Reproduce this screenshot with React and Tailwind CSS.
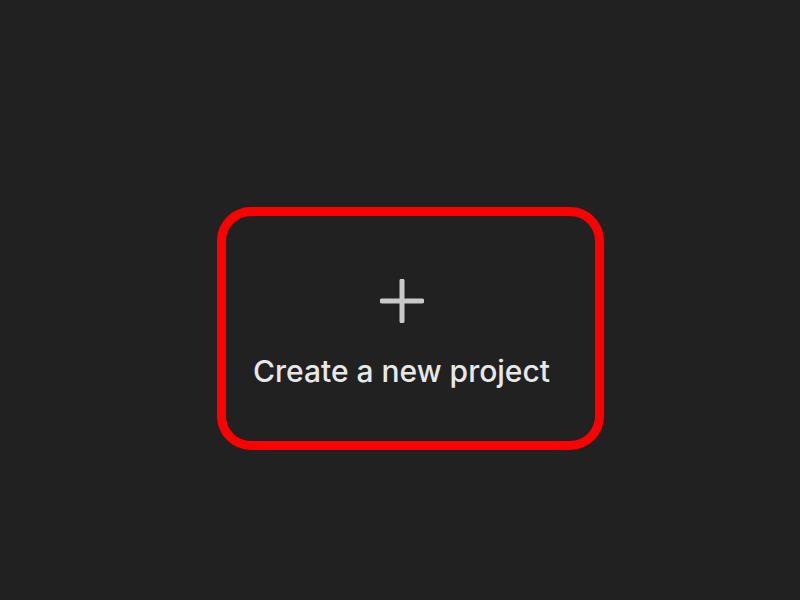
const App = () => {
  return (
    <div className="h-[600px] w-full bg-[#212121] pl-[217px] pt-[207px]">
      <div className="flex h-[243px] w-[387px] flex-col items-center rounded-[34px] border-[9px] border-[#ff0000] bg-[#212121] pr-[18px] pt-[63px]">
        <svg width="44" height="44" viewBox="0 0 44 44" fill="none">
          <line x1="22" y1="2" x2="22" y2="42" stroke="#c9c9c9" strokeWidth="5" strokeLinecap="round" />
          <line x1="2" y1="22" x2="42" y2="22" stroke="#c9c9c9" strokeWidth="5" strokeLinecap="round" />
        </svg>
        <span className="mt-[33px] font-['Inter',sans-serif] text-[30px] font-medium leading-none text-[#e8e8e8]">
          Create a new project
        </span>
      </div>
    </div>
  );
};

export default App;
